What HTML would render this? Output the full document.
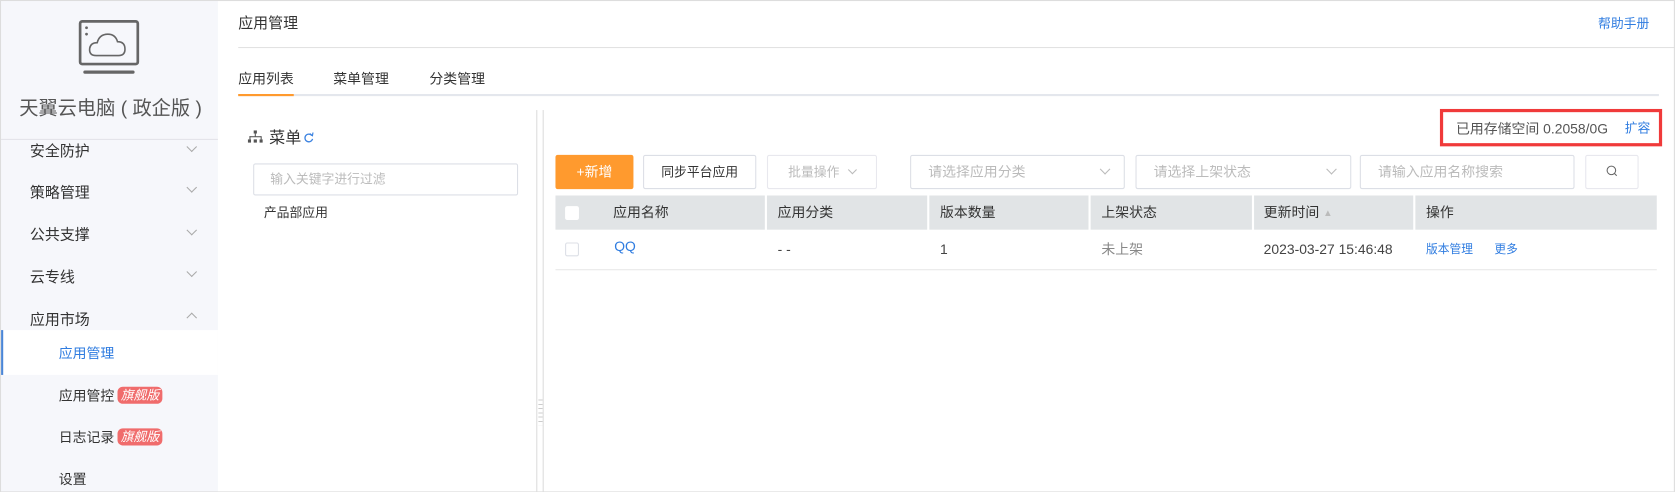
<!DOCTYPE html>
<html><head><meta charset="utf-8"><style>
*{margin:0;padding:0;box-sizing:border-box}
body{width:1675px;height:492px;position:relative;overflow:hidden;background:#fff;font-family:"Liberation Sans","Noto Sans CJK SC",sans-serif;color:#333;font-size:14px}
#w{position:absolute;left:0;top:0;width:1568px;height:461px;transform:scale(1.0682);transform-origin:0 0}
.a{position:absolute;white-space:nowrap}
.side{left:1px;top:1px;width:203px;height:460px;background:#f6f7fb}
.mi{left:28px;font-size:14px;color:#333}
.chev{position:absolute;left:176px;width:7px;height:7px;border-right:1px solid #aaa;border-bottom:1px solid #aaa;transform:rotate(45deg)}
.up{transform:rotate(-135deg)}
.badge{display:inline-block;background:#f06c6c;color:#fff;font-style:italic;font-size:12px;border-radius:5px;padding:0 3px;line-height:16px;margin-left:3px;vertical-align:1px}
.btn{border:1px solid #dcdfe6;border-radius:2px;font-size:13px;text-align:center;line-height:30px;height:32px}
.sel{border:1px solid #dcdfe6;border-radius:2px;height:32px;line-height:30px;padding-left:16px;color:#bbb;font-size:13px}
.sel i{position:absolute;right:14px;top:9px;width:7px;height:7px;border-right:1px solid #bbb;border-bottom:1px solid #bbb;transform:rotate(45deg)}
.th{top:183px;height:32px;background:#e1e4e6;line-height:32px;font-size:13px;color:#333}
.td{top:214px;line-height:40px;font-size:13px;color:#444}
</style></head><body>
<div id="w">
<div class="a" style="left:0;top:0;width:1568px;height:461px;border:1px solid #ddd;z-index:9"></div>
<div class="a side"></div>
<svg class="a" style="left:73px;top:18px" width="58" height="54" viewBox="0 0 58 54"><rect x="2" y="2" width="54" height="40" rx="2" fill="none" stroke="#666" stroke-width="2.5"/><circle cx="8" cy="8" r="1.3" fill="#666"/><circle cx="8" cy="14" r="1.3" fill="#666"/><path d="M17 34 Q10 34 11 27 Q12 22 18 22 Q20 14 28 14 Q35 14 37 21 Q44 21 44 28 Q44 34 38 34 Z" fill="none" stroke="#666" stroke-width="1.5"/><rect x="5" y="48" width="48" height="3" rx="1.5" fill="#666"/></svg>
<div class="a" style="left:18px;top:87px;font-size:18px;color:#555">天翼云电脑 ( 政企版 )</div>
<div class="a" style="left:1px;top:130px;width:203px;height:1px;background:#e3e3e8"></div>
<div class="a mi" style="top:131px">安全防护</div><span class="chev" style="top:134px"></span>
<div class="a mi" style="top:170px">策略管理</div><span class="chev" style="top:172px"></span>
<div class="a mi" style="top:209px">公共支撑</div><span class="chev" style="top:212px"></span>
<div class="a mi" style="top:249px">云专线</div><span class="chev" style="top:251px"></span>
<div class="a mi" style="top:289px">应用市场</div><span class="chev up" style="top:294px"></span>
<div class="a" style="left:1px;top:309px;width:203px;height:42px;background:#fff;border-left:2px solid #4a86d8"></div>
<div class="a" style="left:55px;top:320px;color:#2f7ce0;font-size:13px">应用管理</div>
<div class="a" style="left:55px;top:360px;font-size:13px">应用管控<span class="badge">旗舰版</span></div>
<div class="a" style="left:55px;top:399px;font-size:13px">日志记录<span class="badge">旗舰版</span></div>
<div class="a" style="left:55px;top:438px;font-size:13px">设置</div>

<div class="a" style="left:223px;top:11px;font-size:14px">应用管理</div>
<div class="a" style="left:1496px;top:13px;font-size:12px;color:#2f7ce0">帮助手册</div>
<div class="a" style="left:223px;top:44px;width:1345px;height:1px;background:#e2e2e2"></div>
<div class="a" style="left:223px;top:63px;font-size:13px">应用列表</div>
<div class="a" style="left:312px;top:63px;font-size:13px">菜单管理</div>
<div class="a" style="left:402px;top:63px;font-size:13px">分类管理</div>
<div class="a" style="left:223px;top:88px;width:1330px;height:2px;background:#e4e7ed"></div>
<div class="a" style="left:223px;top:88px;width:52px;height:2px;background:#ff9a2e"></div>

<svg class="a" style="left:232px;top:122px" width="14" height="12" viewBox="0 0 14 12"><rect x="5.5" y="0" width="3" height="3" fill="#555"/><rect x="6.5" y="3" width="1" height="3" fill="#555"/><rect x="1.5" y="5.5" width="11" height="1" fill="#555"/><rect x="1.5" y="5.5" width="1" height="3" fill="#555"/><rect x="12" y="5.5" width="1" height="3" fill="#555"/><rect x="0" y="8.5" width="3" height="3" fill="#555"/><rect x="5.5" y="8.5" width="3" height="3" fill="#555"/><rect x="11" y="8.5" width="3" height="3" fill="#555"/></svg>
<div class="a" style="left:252px;top:118px;font-size:15px">菜单</div>
<svg class="a" style="left:284px;top:124px" width="10" height="10" viewBox="0 0 10 10"><path d="M8 3 A3.6 3.6 0 1 0 8.6 6" fill="none" stroke="#3b82e0" stroke-width="1.2"/><path d="M6 1 L8.5 3 L9 0" fill="none" stroke="#3b82e0" stroke-width="1.1"/></svg>
<div class="a" style="left:237px;top:153px;width:248px;height:30px;border:1px solid #dcdfe6;border-radius:2px;padding-left:15px;line-height:28px;color:#bbb;font-size:12px">输入关键字进行过滤</div>
<div class="a" style="left:247px;top:190px;font-size:12px">产品部应用</div>
<div class="a" style="left:502px;top:103px;width:1px;height:358px;background:#ddd"></div>
<div class="a" style="left:508px;top:103px;width:1px;height:358px;background:#ddd"></div>
<div class="a" style="left:504px;top:374px;width:4px;height:24px;background:repeating-linear-gradient(#ccc 0 1px,transparent 1px 4px)"></div>

<div class="a" style="left:1348px;top:102px;width:208px;height:35px;border:3px solid #f03a3a"></div>
<div class="a" style="left:1363px;top:110px;font-size:13px;color:#555">已用存储空间 0.2058/0G</div>
<div class="a" style="left:1521px;top:111px;font-size:12px;color:#2f7ce0">扩容</div>

<div class="a btn" style="left:520px;top:145px;width:73px;background:#ff9a2e;border-color:#ff9a2e;color:#fff">+新增</div>
<div class="a btn" style="left:602px;top:145px;width:106px;color:#333;font-size:12px">同步平台应用</div>
<div class="a btn" style="left:718px;top:145px;width:103px;color:#bbb;border-color:#e8e8ee;font-size:12px">批量操作 <span style="display:inline-block;width:6px;height:6px;border-right:1px solid #bbb;border-bottom:1px solid #bbb;transform:rotate(45deg);margin-left:6px;vertical-align:3px"></span></div>
<div class="a sel" style="left:852px;top:145px;width:201px">请选择应用分类<i></i></div>
<div class="a sel" style="left:1063px;top:145px;width:202px">请选择上架状态<i></i></div>
<div class="a sel" style="left:1273px;top:145px;width:201px">请输入应用名称搜索</div>
<div class="a btn" style="left:1484px;top:145px;width:50px;border-color:#e8e8ee"><svg width="12" height="12" viewBox="0 0 12 12" style="vertical-align:-1px"><circle cx="5.5" cy="5.5" r="4" fill="none" stroke="#666" stroke-width="1"/><path d="M8.3 8.3 L10.5 10.5" stroke="#666"/></svg></div>

<div class="a th" style="left:520px;width:196px;padding-left:54px">应用名称</div>
<div class="a th" style="left:718px;width:150px;padding-left:10px">应用分类</div>
<div class="a th" style="left:870px;width:149px;padding-left:10px">版本数量</div>
<div class="a th" style="left:1021px;width:151px;padding-left:10px">上架状态</div>
<div class="a th" style="left:1174px;width:149px;padding-left:9px">更新时间 <span style="color:#bbb;font-size:9px;vertical-align:1px">&#9650;</span></div>
<div class="a th" style="left:1325px;width:226px;padding-left:10px">操作</div>
<div class="a" style="left:529px;top:193px;width:13px;height:13px;background:#fff;border-radius:2px"></div>
<div class="a" style="left:529px;top:227px;width:13px;height:13px;border:1px solid #dcdfe6;border-radius:2px"></div>
<div class="a td" style="left:575px;color:#2f7ce0;top:211px">QQ</div>
<div class="a td" style="left:728px">- -</div>
<div class="a td" style="left:880px">1</div>
<div class="a td" style="left:1031px;color:#888">未上架</div>
<div class="a td" style="left:1183px">2023-03-27 15:46:48</div>
<div class="a td" style="left:1335px;font-size:11px;color:#2f7ce0">版本管理</div>
<div class="a td" style="left:1399px;font-size:11px;color:#2f7ce0">更多</div>
<div class="a" style="left:520px;top:252px;width:1031px;height:1px;background:#e8e8e8"></div>
</div>
</body></html>
